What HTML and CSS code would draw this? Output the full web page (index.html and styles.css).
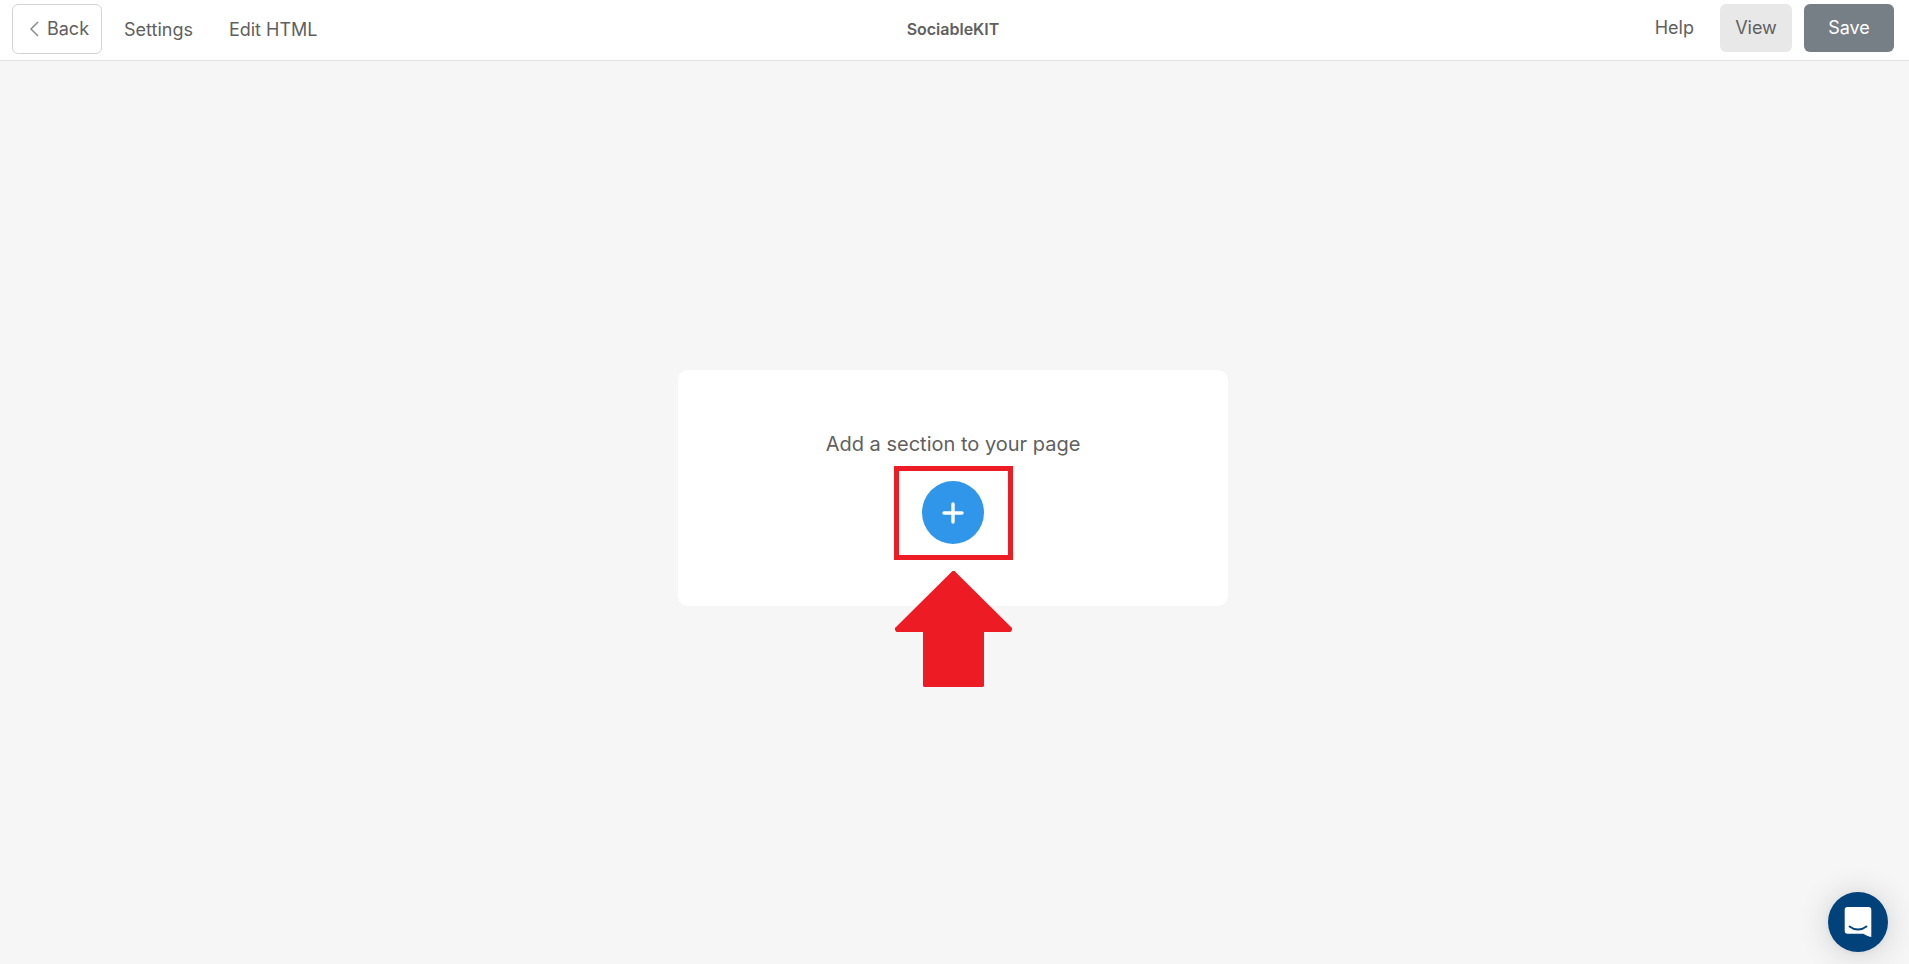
FILE: index.html
```html
<!DOCTYPE html>
<html lang="en">
<head>
	<meta charset="utf-8">
	<title>SociableKIT</title>
	<link rel="stylesheet" href="styles.css">
</head>
<body>
	<header class="topbar">
		<nav class="left">
			<button type="button" class="btn back">
				<svg width="10" height="16" viewBox="0 0 10 16" fill="none" stroke="#8c8c8c" stroke-width="1.5"><path d="M9 1L2 8l7 7"/></svg>
				Back
			</button>
			<a href="#" class="link">Settings</a>
			<a href="#" class="link">Edit HTML</a>
		</nav>
		<h1 class="title">SociableKIT</h1>
		<div class="right">
			<a href="#" class="help">Help</a>
			<button type="button" class="btn view">View</button>
			<button type="button" class="btn save">Save</button>
		</div>
	</header>

	<main class="page">
		<section class="card">
			<p class="hint">Add a section to your page</p>
			<div class="add-wrap">
				<button type="button" class="add" aria-label="Add section">
					<svg width="22" height="22" viewBox="0 0 22 22" fill="none" stroke="#fff" stroke-width="3.4" stroke-linecap="round" stroke-linejoin="round"><path d="M11 2v18M2 11h18"/></svg>
				</button>
				<!-- highlight box and arrow over the add button -->
				<div class="marker"></div>
				<svg class="arrow" width="117" height="116" viewBox="0 0 117 116" fill="#ed1c24"><path d="M57.500 0h2L117 57v2l-1.500 2H89v54l-1 1H29l-1-1V61H1.500L0 59v-2z"/></svg>
			</div>
		</section>
	</main>

	<button type="button" class="chat" aria-label="Open chat">
		<svg width="28" height="32" viewBox="0 0 28 32"><path fill="#fff" d="M3.500 1h21a2.800 2.800 0 0 1 2.800 2.800V31c-3-.6-5.500-1.600-8-3.200H3.500a2.800 2.800 0 0 1-2.800-2.800V3.800A2.800 2.800 0 0 1 3.500 1z"/><path fill="none" stroke="#02427a" stroke-width="1.800" stroke-linecap="round" d="M5.500 20.500c5 4 12 4 17 0"/></svg>
	</button>
</body>
</html>
```

FILE: styles.css
```css
* {
	box-sizing: border-box;
	margin: 0;
	padding: 0;
}
body {
	display: flex;
	flex-direction: column;
	min-height: 100vh;
	background: #f6f6f6;
	color: #606060;
	font-family: Inter, "Liberation Sans", sans-serif;
	font-size: 18px;
	line-height: 24px;
}
a {
	color: inherit;
	text-decoration: none;
}
button {
	border: 0;
	color: inherit;
	font: inherit;
	cursor: pointer;
}
.topbar {
	display: grid;
	grid-template-columns: 1fr auto 1fr;
	align-items: start;
	padding: 4px 15px 6px 12px;
	background: #fff;
	border-bottom: 1px solid #e2e2e2;
}
.left,
.right {
	display: flex;
	align-items: center;
}
.right {
	justify-content: flex-end;
}
.btn {
	height: 48px;
	border-radius: 6px;
}
.back {
	display: flex;
	align-items: center;
	justify-content: center;
	gap: 8px;
	width: 90px;
	height: 50px;
	padding-left: 4px;
	background: #fff;
	border: 1px solid #d4d4d4;
}
.link {
	margin-left: 22px;
	padding-top: 2px;
}
.link + .link {
	margin-left: 36px;
}
.title {
	font-size: 16px;
	font-weight: 600;
	line-height: 50px;
}
.help {
	margin-right: 26px;
}
.view {
	width: 72px;
	margin-right: 12px;
	background: #e8e8e8;
}
.save {
	width: 90px;
	background: #757f85;
	color: #fff;
}
.page {
	flex: 1;
	display: flex;
	align-items: center;
	justify-content: center;
	padding: 0 3px 49px 0;
}
.card {
	display: flex;
	flex-direction: column;
	align-items: center;
	gap: 25px;
	width: 550px;
	padding: 62px 20px;
	background: #fff;
	border-radius: 10px;
}
.hint {
	font-size: 20px;
}
.add-wrap {
	position: relative;
	display: flex;
}
.add {
	display: flex;
	align-items: center;
	justify-content: center;
	width: 62px;
	height: 63px;
	border-radius: 50%;
	background: #2f96e9;
}
.marker {
	position: absolute;
	top: -15px;
	left: -28px;
	width: 119px;
	height: 94px;
	border: 5px solid #ed1c24;
	pointer-events: none;
}
.arrow {
	position: absolute;
	top: 90px;
	left: -27px;
	pointer-events: none;
}
.chat {
	position: fixed;
	right: 21px;
	bottom: 12px;
	display: flex;
	align-items: center;
	justify-content: center;
	width: 60px;
	height: 60px;
	border-radius: 50%;
	background: #02427a;
	box-shadow: 0 1px 6px rgba(0, 0, 0, .06), 0 2px 32px rgba(0, 0, 0, .16);
}
```
